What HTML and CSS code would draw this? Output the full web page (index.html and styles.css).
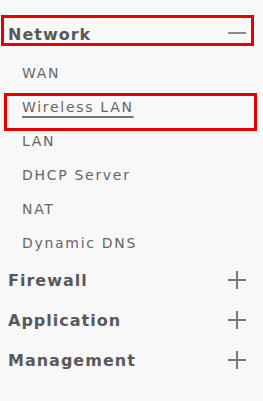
FILE: index.html
```html
<!DOCTYPE html>
<html>
<head>
<meta charset="utf-8">
<link rel="stylesheet" href="styles.css">
</head>
<body>
<nav class="menu">
  <div class="head head-open">
    <span class="head-label">Network</span>
    <span class="toggle minus"></span>
  </div>
  <ul class="sub">
    <li class="sub-item">WAN</li>
    <li class="sub-item active"><span class="link">Wireless LAN</span></li>
    <li class="sub-item">LAN</li>
    <li class="sub-item">DHCP Server</li>
    <li class="sub-item">NAT</li>
    <li class="sub-item">Dynamic DNS</li>
  </ul>
  <div class="head">
    <span class="head-label">Firewall</span>
    <span class="toggle plus"></span>
  </div>
  <div class="head">
    <span class="head-label">Application</span>
    <span class="toggle plus"></span>
  </div>
  <div class="head">
    <span class="head-label">Management</span>
    <span class="toggle plus"></span>
  </div>
</nav>
</body>
</html>
```

FILE: styles.css
```css
html, body {
  margin: 0;
  padding: 0;
  background: #f8f8f8;
}
body {
  width: 263px;
  height: 401px;
  overflow: hidden;
  font-family: "DejaVu Sans", sans-serif;
}
.menu {
  padding-top: 15px;
}
.head {
  display: flex;
  align-items: center;
  justify-content: space-between;
  height: 40px;
  box-sizing: border-box;
  width: 253px;
  margin-left: 1px;
  padding: 0 8px 0 7px;
}
.head-open {
  height: 31px;
  border: 3px solid #e60000;
  padding: 7px 5px 0 4px;
  margin-bottom: 10px;
}
.head-label {
  font-size: 16px;
  font-weight: bold;
  letter-spacing: 1px;
  color: #58585a;
}
.toggle {
  position: relative;
  width: 18px;
  height: 18px;
  display: block;
}
.toggle::before,
.toggle::after {
  content: "";
  position: absolute;
  background: #7a7a7a;
}
.toggle::before {
  left: 0;
  right: 0;
  top: 8px;
  height: 2px;
}
.plus::after {
  top: 0;
  bottom: 0;
  left: 8px;
  width: 2px;
}
.minus {
  margin-top: -3px;
}
.minus::before {
  background: #888;
}
.sub {
  list-style: none;
  margin: 0;
  padding: 0;
}
.sub-item {
  position: relative;
  height: 34px;
  display: flex;
  align-items: center;
  padding-left: 22px;
  font-size: 14px;
  letter-spacing: 1.7px;
  color: #666;
}
.active::after {
  content: "";
  position: absolute;
  left: 4px;
  top: 3px;
  width: 253px;
  height: 38px;
  box-sizing: border-box;
  border: 3px solid #e60000;
}
.link {
  text-decoration: underline;
  text-underline-offset: 4px;
  text-decoration-thickness: 2px;
  text-decoration-color: #777;
}
```
